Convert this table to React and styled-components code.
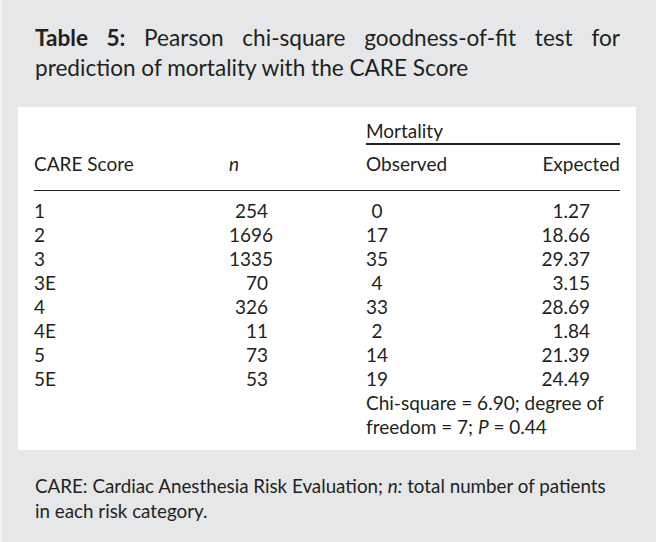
import React from 'react';
import styled, { createGlobalStyle } from 'styled-components';

const rows = [
	{ score: '1', n: '254', observed: '0', expected: '1.27' },
	{ score: '2', n: '1696', observed: '17', expected: '18.66' },
	{ score: '3', n: '1335', observed: '35', expected: '29.37' },
	{ score: '3E', n: '70', observed: '4', expected: '3.15' },
	{ score: '4', n: '326', observed: '33', expected: '28.69' },
	{ score: '4E', n: '11', observed: '2', expected: '1.84' },
	{ score: '5', n: '73', observed: '14', expected: '21.39' },
	{ score: '5E', n: '53', observed: '19', expected: '24.49' },
];

function App() {
	return (
		<>
			<GlobalStyle />
			<Page>
				<Caption>
					<FirstLine>
						<b>Table 5:</b> Pearson chi-square goodness-of-fit test for
					</FirstLine>
					prediction of mortality with the CARE Score
				</Caption>
				<Panel>
					<SpanRow>
						<Spanner>Mortality</Spanner>
					</SpanRow>
					<HeadRow>
						<Cell>CARE Score</Cell>
						<Cell>
							<i>n</i>
						</Cell>
						<Cell />
						<Cell>Observed</Cell>
						<Cell align="right">Expected</Cell>
					</HeadRow>
					<Body>
						{rows.map(row => (
							<Row key={row.score}>
								<Cell>{row.score}</Cell>
								<Cell align="right">{row.n}</Cell>
								<Cell />
								<Cell>
									<Digits>{row.observed}</Digits>
								</Cell>
								<Cell align="right" inset>
									{row.expected}
								</Cell>
							</Row>
						))}
						<Row>
							<Note>
								Chi-square = 6.90; degree of
								<br />
								freedom = 7; <i>P</i> = 0.44
							</Note>
						</Row>
					</Body>
				</Panel>
				<Footnote>
					CARE: Cardiac Anesthesia Risk Evaluation; <i>n:</i> total number of patients
					<br />
					in each risk category.
				</Footnote>
			</Page>
		</>
	);
}

const GlobalStyle = createGlobalStyle`
	body {
		margin: 0;
		background: #e6e7e9;
		font-family: Lato, "Open Sans", "Liberation Sans", sans-serif;
		color: #231f20;
	}
`;

const Page = styled.div`
	box-sizing: border-box;
	width: 656px;
	height: 542px;
	padding-top: 23px;
	background: #e6e7e9;
	border-left: 2px solid #f3f3f4;
	overflow: hidden;
`;

const Caption = styled.div`
	margin: 0 36px 0 33px;
	font-size: 22.6px;
	line-height: 30px;

	b {
		font-weight: 700;
	}
`;

const FirstLine = styled.div`
	text-align: justify;
	text-align-last: justify;
`;

const Panel = styled.div`
	margin: 24px 20px 0 16px;
	padding: 12px 16px 11px;
	background: #fff;
	font-size: 19px;
	line-height: 24px;
`;

const Grid = styled.div`
	display: grid;
	grid-template-columns: 195px 39px 98px 114px 1fr;
`;

const SpanRow = styled(Grid)``;

const Spanner = styled.div`
	grid-column: 4 / 6;
	border-bottom: 2px solid #231f20;
`;

const HeadRow = styled(Grid)`
	margin-top: 7px;
	padding-bottom: 14px;
	border-bottom: 1px solid #231f20;
`;

const Body = styled.div`
	padding-top: 8px;
`;

const Row = styled(Grid)``;

const Cell = styled.div`
	text-align: ${props => props.align || 'left'};
	padding-right: ${props => (props.inset ? '30px' : '0')};
	white-space: nowrap;
`;

const Digits = styled.span`
	display: inline-block;
	min-width: 2ch;
	text-align: center;
	font-variant-numeric: tabular-nums;
`;

const Note = styled.div`
	grid-column: 4 / 6;
`;

const Footnote = styled.div`
	margin: 23px 30px 0 33px;
	font-size: 18.8px;
	line-height: 25px;
`;

export default App;
